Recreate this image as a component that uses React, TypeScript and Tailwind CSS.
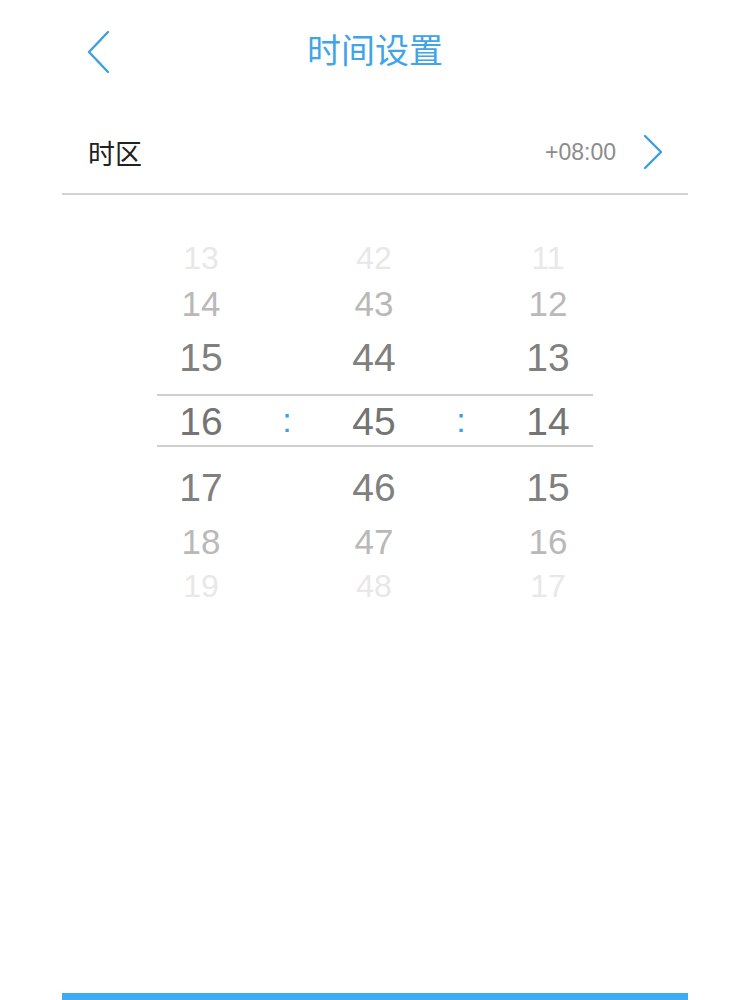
import React from "react";

const cjk = { fontFamily: '"Noto Sans CJK SC", "Noto Sans", sans-serif' };
const num = { fontFamily: '"Liberation Sans", Arial, sans-serif' };

type Row = { vals: [string, string, string]; h: string; cls: string; pad: string; colon?: boolean };

const rows: Row[] = [
  { vals: ["13", "42", "11"], h: "h-[40px]", cls: "text-[32px] text-[#e8e8e8]", pad: "" },
  { vals: ["14", "43", "12"], h: "h-[50px]", cls: "text-[35px] text-[#b9b9b9]", pad: "" },
  { vals: ["15", "44", "13"], h: "h-[66px]", cls: "text-[39px] text-[#808080]", pad: "pb-[8px]" },
  { vals: ["16", "45", "14"], h: "h-[53px]", cls: "text-[39px] text-[#747474]", pad: "pt-[2px] border-y-2 border-[#cfcfcf]", colon: true },
  { vals: ["17", "46", "15"], h: "h-[66px]", cls: "text-[39px] text-[#808080]", pad: "pt-[14px]" },
  { vals: ["18", "47", "16"], h: "h-[56px]", cls: "text-[35px] text-[#b9b9b9]", pad: "" },
  { vals: ["19", "48", "17"], h: "h-[34px]", cls: "text-[32px] text-[#e8e8e8]", pad: "" },
];

export default function App() {
  return (
    <div className="w-[750px] min-h-[1000px] bg-white overflow-hidden">
      {/* header */}
      <div className="h-[97px] grid grid-cols-[1fr_auto_1fr] items-center px-[86px]">
        <div className="flex items-center pt-[6px]">
          <svg width="26" height="44" viewBox="0 0 26 44">
            <path d="M22 2 L3 22 L22 42" fill="none" stroke="#3b9fe0" strokeWidth="2.4" strokeLinecap="round" strokeLinejoin="round" />
          </svg>
        </div>
        <div style={cjk} className="text-[34px] leading-none text-[#3fa5e8]">时间设置</div>
        <div />
      </div>

      {/* timezone row */}
      <div className="mx-[62px] h-[98px] pt-[14px] border-b-2 border-[#d2d2d2] flex items-center pl-[26px] pr-[26px]">
        <div style={cjk} className="text-[27px] leading-none text-[#222222]">时区</div>
        <div className="flex-1" />
        <div style={num} className="text-[23px] leading-none text-[#8c8c8c] mr-[26px]">+08:00</div>
        <svg width="22" height="36" viewBox="0 0 22 36" className="mr-[-2px]">
          <path d="M3 2 L19 18 L3 34" fill="none" stroke="#3b9fe0" strokeWidth="2.4" strokeLinecap="round" strokeLinejoin="round" />
        </svg>
      </div>

      {/* picker */}
      <div className="mt-[43px] w-[436px] mx-auto flex flex-col">
        {rows.map((r, i) => (
          <div key={i} className={`${r.h} ${r.pad} grid grid-cols-[88px_84px_90px_84px_90px] items-center`} style={num}>
            <div className={`${r.cls} leading-none text-center`}>{r.vals[0]}</div>
            <div className="text-[34px] leading-none text-center text-[#3b9fe0] pb-[4px]">{r.colon ? ":" : ""}</div>
            <div className={`${r.cls} leading-none text-center`}>{r.vals[1]}</div>
            <div className="text-[34px] leading-none text-center text-[#3b9fe0] pb-[4px]">{r.colon ? ":" : ""}</div>
            <div className={`${r.cls} leading-none text-center`}>{r.vals[2]}</div>
          </div>
        ))}
      </div>

      {/* bottom bar */}
      <div className="mt-[390px] mx-[62px] h-[20px] bg-[#3aabf5]" />
    </div>
  );
}
